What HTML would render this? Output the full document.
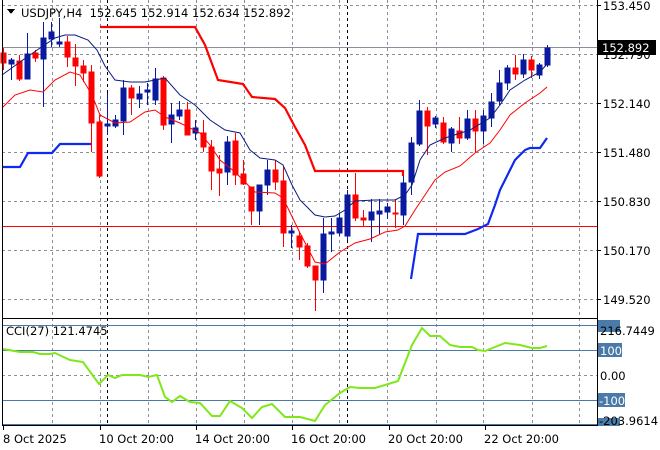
<!DOCTYPE html>
<html><head><meta charset="utf-8"><style>
html,body{margin:0;padding:0;background:#fff;width:660px;height:450px;overflow:hidden}
svg{display:block}
text{font-family:"DejaVu Sans","Liberation Sans",sans-serif;font-size:11.5px;fill:#000}
</style></head><body>
<svg width="660" height="450" viewBox="0 0 660 450" xmlns="http://www.w3.org/2000/svg" shape-rendering="crispEdges">
<rect width="660" height="450" fill="#fff"/>
<g stroke="#8a8f99" stroke-dasharray="3,3" stroke-width="1">
<line x1="2" y1="54.5" x2="597" y2="54.5"/><line x1="2" y1="103.5" x2="597" y2="103.5"/><line x1="2" y1="152.5" x2="597" y2="152.5"/><line x1="2" y1="201.5" x2="597" y2="201.5"/><line x1="2" y1="250.5" x2="597" y2="250.5"/><line x1="2" y1="299.5" x2="597" y2="299.5"/><line x1="2" y1="5.5" x2="597" y2="5.5"/>
<line x1="2" y1="375.5" x2="597" y2="375.5"/>
<line x1="52.5" y1="0" x2="52.5" y2="425"/><line x1="100.5" y1="0" x2="100.5" y2="425"/><line x1="148.5" y1="0" x2="148.5" y2="425"/><line x1="196.5" y1="0" x2="196.5" y2="425"/><line x1="244.5" y1="0" x2="244.5" y2="425"/><line x1="292.5" y1="0" x2="292.5" y2="425"/><line x1="339.5" y1="0" x2="339.5" y2="425"/><line x1="387.5" y1="0" x2="387.5" y2="425"/><line x1="436.5" y1="0" x2="436.5" y2="425"/><line x1="483.5" y1="0" x2="483.5" y2="425"/><line x1="532.5" y1="0" x2="532.5" y2="425"/><line x1="579.5" y1="0" x2="579.5" y2="425"/>
</g>
<g stroke="#000" stroke-dasharray="3,3"><line x1="107.5" y1="0" x2="107.5" y2="425"/><line x1="347.5" y1="0" x2="347.5" y2="425"/></g>
<g stroke="#4a7aa8"><line x1="2" y1="325.5" x2="597" y2="325.5"/><line x1="2" y1="350.5" x2="597" y2="350.5"/><line x1="2" y1="400.5" x2="597" y2="400.5"/><line x1="2" y1="424.5" x2="597" y2="424.5"/></g>
<line x1="2" y1="47.5" x2="597" y2="47.5" stroke="#8a8f99"/>
<line x1="2" y1="226.5" x2="597" y2="226.5" stroke="#f00"/>
<g stroke-width="1">
<g stroke="#f00" fill="#f00">
<line x1="3.5" y1="48" x2="3.5" y2="70"/><rect x="1" y="53" width="5" height="10"/>
<line x1="19.5" y1="55" x2="19.5" y2="81"/><rect x="17" y="61" width="5" height="18"/>
<line x1="35.5" y1="50" x2="35.5" y2="62"/><rect x="33" y="53" width="5" height="5"/>
<line x1="67.5" y1="36" x2="67.5" y2="67"/><rect x="65" y="42" width="5" height="15"/>
<line x1="75.5" y1="44" x2="75.5" y2="86"/><rect x="73" y="58" width="5" height="8"/>
<line x1="83.5" y1="60" x2="83.5" y2="82"/><rect x="81" y="66" width="5" height="7"/>
<line x1="91.5" y1="65" x2="91.5" y2="152"/><rect x="89" y="72" width="5" height="51"/>
<line x1="99.5" y1="115" x2="99.5" y2="178"/><rect x="97" y="122" width="5" height="54"/>
<line x1="131.5" y1="85" x2="131.5" y2="115"/><rect x="129" y="88" width="5" height="10"/>
<line x1="163.5" y1="76" x2="163.5" y2="130"/><rect x="161" y="78" width="5" height="47"/>
<line x1="187.5" y1="102" x2="187.5" y2="135"/><rect x="185" y="110" width="5" height="25"/>
<line x1="203.5" y1="120" x2="203.5" y2="152"/><rect x="201" y="133" width="5" height="14"/>
<line x1="211.5" y1="140" x2="211.5" y2="190"/><rect x="209" y="147" width="5" height="24"/>
<line x1="219.5" y1="155" x2="219.5" y2="196"/><rect x="217" y="169" width="5" height="4"/>
<line x1="235.5" y1="133" x2="235.5" y2="185"/><rect x="233" y="141" width="5" height="34"/>
<line x1="243.5" y1="160" x2="243.5" y2="185"/><rect x="241" y="174" width="5" height="10"/>
<line x1="251.5" y1="187" x2="251.5" y2="225"/><rect x="249" y="187" width="5" height="24"/>
<line x1="275.5" y1="160" x2="275.5" y2="190"/><rect x="273" y="170" width="5" height="12"/>
<line x1="283.5" y1="167" x2="283.5" y2="247"/><rect x="281" y="181" width="5" height="52"/>
<line x1="299.5" y1="232" x2="299.5" y2="260"/><rect x="297" y="236" width="5" height="11"/>
<line x1="307.5" y1="243" x2="307.5" y2="268"/><rect x="305" y="246" width="5" height="20"/>
<line x1="315.5" y1="266" x2="315.5" y2="311"/><rect x="313" y="266" width="5" height="14"/>
<line x1="355.5" y1="173" x2="355.5" y2="221"/><rect x="353" y="195" width="5" height="23"/>
<line x1="363.5" y1="210" x2="363.5" y2="227"/><rect x="361" y="218" width="5" height="2"/>
<line x1="395.5" y1="199" x2="395.5" y2="228"/><rect x="393" y="213" width="5" height="1"/>
<line x1="427.5" y1="107" x2="427.5" y2="155"/><rect x="425" y="111" width="5" height="15"/>
<line x1="443.5" y1="117" x2="443.5" y2="144"/><rect x="441" y="123" width="5" height="19"/>
<line x1="459.5" y1="117" x2="459.5" y2="144"/><rect x="457" y="131" width="5" height="7"/>
<line x1="475.5" y1="110" x2="475.5" y2="152"/><rect x="473" y="119" width="5" height="12"/>
<line x1="515.5" y1="55" x2="515.5" y2="80"/><rect x="513" y="68" width="5" height="6"/>
<line x1="531.5" y1="56" x2="531.5" y2="78"/><rect x="529" y="60" width="5" height="10"/>
</g>
<g stroke="#0a1aa0" fill="#0a1aa0">
<line x1="11.5" y1="58" x2="11.5" y2="80"/><rect x="9" y="60" width="5" height="4"/>
<line x1="27.5" y1="33" x2="27.5" y2="79"/><rect x="25" y="54" width="5" height="25"/>
<line x1="43.5" y1="22" x2="43.5" y2="107"/><rect x="41" y="38" width="5" height="21"/>
<line x1="51.5" y1="22" x2="51.5" y2="47"/><rect x="49" y="32" width="5" height="7"/>
<line x1="59.5" y1="18" x2="59.5" y2="47"/><rect x="57" y="42" width="5" height="2"/>
<line x1="107.5" y1="93" x2="107.5" y2="135"/><rect x="105" y="124" width="5" height="2"/>
<line x1="115.5" y1="115" x2="115.5" y2="128"/><rect x="113" y="120" width="5" height="6"/>
<line x1="123.5" y1="80" x2="123.5" y2="135"/><rect x="121" y="88" width="5" height="33"/>
<line x1="139.5" y1="86" x2="139.5" y2="108"/><rect x="137" y="94" width="5" height="5"/>
<line x1="147.5" y1="83" x2="147.5" y2="105"/><rect x="145" y="90" width="5" height="2"/>
<line x1="155.5" y1="68" x2="155.5" y2="105"/><rect x="153" y="79" width="5" height="21"/>
<line x1="171.5" y1="103" x2="171.5" y2="143"/><rect x="169" y="115" width="5" height="9"/>
<line x1="179.5" y1="101" x2="179.5" y2="120"/><rect x="177" y="110" width="5" height="6"/>
<line x1="195.5" y1="120" x2="195.5" y2="140"/><rect x="193" y="128" width="5" height="5"/>
<line x1="227.5" y1="136" x2="227.5" y2="185"/><rect x="225" y="142" width="5" height="30"/>
<line x1="259.5" y1="185" x2="259.5" y2="225"/><rect x="257" y="185" width="5" height="26"/>
<line x1="267.5" y1="160" x2="267.5" y2="195"/><rect x="265" y="170" width="5" height="15"/>
<line x1="291.5" y1="225" x2="291.5" y2="248"/><rect x="289" y="231" width="5" height="2"/>
<line x1="323.5" y1="218" x2="323.5" y2="293"/><rect x="321" y="234" width="5" height="46"/>
<line x1="331.5" y1="218" x2="331.5" y2="252"/><rect x="329" y="232" width="5" height="2"/>
<line x1="339.5" y1="213" x2="339.5" y2="236"/><rect x="337" y="218" width="5" height="15"/>
<line x1="347.5" y1="190" x2="347.5" y2="240"/><rect x="345" y="195" width="5" height="41"/>
<line x1="371.5" y1="199" x2="371.5" y2="242"/><rect x="369" y="212" width="5" height="8"/>
<line x1="379.5" y1="199" x2="379.5" y2="234"/><rect x="377" y="211" width="5" height="3"/>
<line x1="387.5" y1="203" x2="387.5" y2="219"/><rect x="385" y="207" width="5" height="5"/>
<line x1="403.5" y1="176" x2="403.5" y2="225"/><rect x="401" y="183" width="5" height="32"/>
<line x1="411.5" y1="137" x2="411.5" y2="195"/><rect x="409" y="143" width="5" height="39"/>
<line x1="419.5" y1="100" x2="419.5" y2="146"/><rect x="417" y="111" width="5" height="33"/>
<line x1="435.5" y1="116" x2="435.5" y2="128"/><rect x="433" y="118" width="5" height="6"/>
<line x1="451.5" y1="127" x2="451.5" y2="152"/><rect x="449" y="129" width="5" height="14"/>
<line x1="467.5" y1="110" x2="467.5" y2="140"/><rect x="465" y="119" width="5" height="19"/>
<line x1="483.5" y1="110" x2="483.5" y2="144"/><rect x="481" y="116" width="5" height="15"/>
<line x1="491.5" y1="93" x2="491.5" y2="127"/><rect x="489" y="102" width="5" height="16"/>
<line x1="499.5" y1="70" x2="499.5" y2="105"/><rect x="497" y="83" width="5" height="18"/>
<line x1="507.5" y1="65" x2="507.5" y2="90"/><rect x="505" y="68" width="5" height="15"/>
<line x1="523.5" y1="54" x2="523.5" y2="78"/><rect x="521" y="60" width="5" height="14"/>
<line x1="539.5" y1="63" x2="539.5" y2="79"/><rect x="537" y="65" width="5" height="10"/>
<line x1="547.5" y1="45" x2="547.5" y2="67"/><rect x="545" y="48" width="5" height="17"/>
</g></g>
<g fill="none" shape-rendering="auto">
<polyline stroke="#0a1a80" stroke-width="1" points="2,75 20,62 40,48 55,38 65,35 75,35 88,40 97,50 105,66 115,80 130,82 145,82 155,80 165,78 180,95 195,105 210,120 225,130 240,133 250,150 260,158 275,160 283,165 292,185 300,200 315,215 325,217 335,216 345,210 355,201 375,200 395,200 405,195 412,185 420,160 430,145 445,138 470,130 490,118 500,105 510,90 525,80 540,72 547,64"/>
<polyline stroke="#f00" stroke-width="1" points="2,108 15,95 30,90 43,92 55,80 70,72 80,75 92,95 100,115 115,123 130,122 145,112 155,110 165,117 180,123 200,133 210,145 220,160 235,172 255,192 275,193 283,198 300,233 315,262 325,264 340,252 355,243 370,239 385,232 398,230 405,226 415,210 425,195 435,180 445,172 460,166 475,153 490,143 500,130 510,115 525,103 540,93 547,87"/>
<polyline stroke="#f00" stroke-width="2.2" points="100,27 195,27 205,45 218,80 243,84 252,97 275,99 285,108 295,127 305,145 315,171 403,171 403,176"/>
<polyline stroke="#0f2af0" stroke-width="2.2" points="2,167 20,167 28,153 52,153 60,144 91,144"/>
<polyline stroke="#0f2af0" stroke-width="2.2" points="411,279 418,234 465,234 478,229 488,224 495,205 500,190 515,160 525,150 530,148 540,148 547,138"/>
<polyline stroke="#7fe81a" stroke-width="2" points="3,349 20,352 33,352 40,354 50,354 55,353 70,360 83,362 99,384 108,375 115,378 122,375 140,375 148,377 157,375 165,397 172,402 180,396 190,402 200,403 212,416 220,416 230,401 242,408 252,418 262,407 272,404 285,417 300,417 315,421 325,405 340,393 350,387 360,388 375,388 385,385 398,381 412,345 422,328 430,336 440,336 450,345 460,347 472,347 478,350 485,351 505,343 520,345 532,348 540,348 547,346"/>
</g>
<g stroke="#000" fill="none">
<line x1="2.5" y1="0" x2="2.5" y2="426"/>
<line x1="597.5" y1="0" x2="597.5" y2="426"/>
<line x1="2" y1="318.5" x2="598" y2="318.5"/>
<line x1="2" y1="425.5" x2="598" y2="425.5"/>
</g>
<g stroke="#000"><line x1="3.5" y1="426" x2="3.5" y2="430"/><line x1="100.5" y1="426" x2="100.5" y2="430"/><line x1="196.5" y1="426" x2="196.5" y2="430"/><line x1="292.5" y1="426" x2="292.5" y2="430"/><line x1="389.5" y1="426" x2="389.5" y2="430"/><line x1="485.5" y1="426" x2="485.5" y2="430"/>
<line x1="597" y1="5.5" x2="601" y2="5.5"/><line x1="597" y1="54.5" x2="601" y2="54.5"/><line x1="597" y1="103.5" x2="601" y2="103.5"/><line x1="597" y1="152.5" x2="601" y2="152.5"/><line x1="597" y1="201.5" x2="601" y2="201.5"/><line x1="597" y1="250.5" x2="601" y2="250.5"/><line x1="597" y1="299.5" x2="601" y2="299.5"/></g>
<path d="M7,9 L15,9 L11,14 Z" fill="#000"/>
<text x="21" y="17">USDJPY,H4&#160;&#160;152.645 152.914 152.634 152.892</text>
<text x="603" y="10">153.450</text>
<text x="603" y="59">152.790</text>
<text x="603" y="108">152.140</text>
<text x="603" y="157">151.480</text>
<text x="603" y="206">150.830</text>
<text x="603" y="255">150.170</text>
<text x="603" y="304">149.520</text>
<rect x="598" y="40" width="58" height="15" fill="#000"/>
<text x="602" y="52" style="fill:#fff">152.892</text>
<text x="6" y="335">CCI(27) 121.4745</text>
<rect x="598" y="320" width="22" height="12" fill="#4a7aa8"/>
<text x="600" y="335">216.7449</text>
<rect x="598" y="343" width="24" height="14" fill="#4a7aa8"/>
<text x="600" y="355" style="fill:#fff">100</text>
<text x="600" y="380">0.00</text>
<rect x="598" y="393" width="27" height="14" fill="#4a7aa8"/>
<text x="599" y="405" style="fill:#fff">-100</text>
<rect x="598" y="418" width="22" height="8" fill="#4a7aa8"/>
<text x="599" y="425">-203.9614</text>
<text x="3" y="443">8 Oct 2025</text>
<text x="99" y="443">10 Oct 20:00</text>
<text x="195" y="443">14 Oct 20:00</text>
<text x="291" y="443">16 Oct 20:00</text>
<text x="388" y="443">20 Oct 20:00</text>
<text x="484" y="443">22 Oct 20:00</text>
</svg>
</body></html>
